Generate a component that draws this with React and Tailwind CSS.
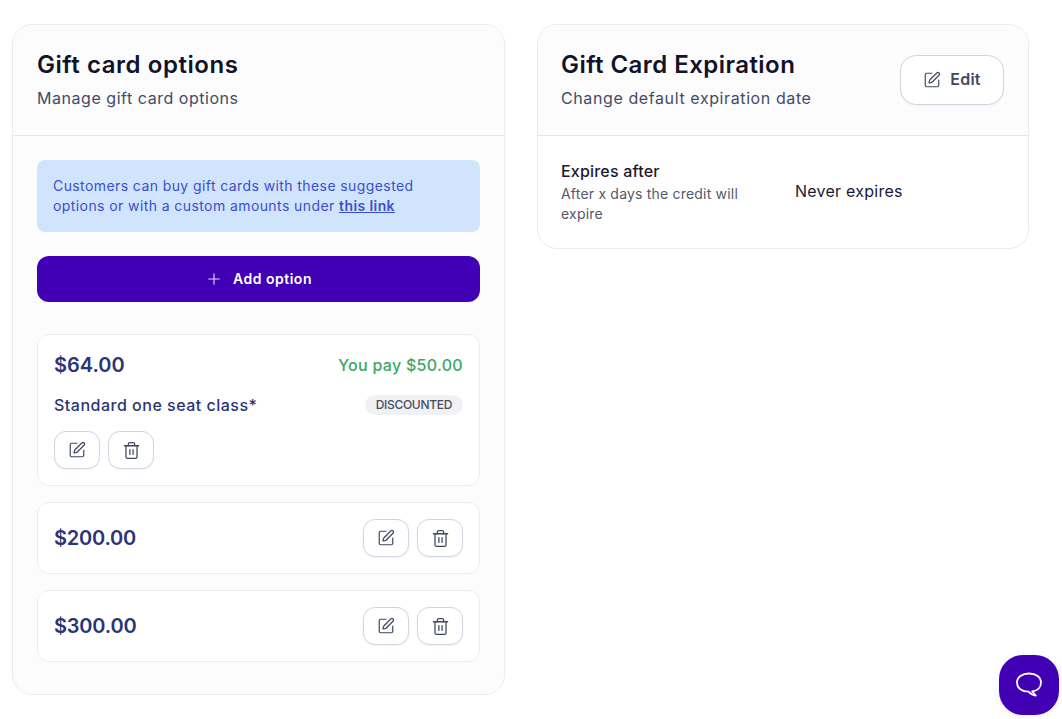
import React from "react";
import { Plus, SquarePen, Trash2 } from "lucide-react";

const IconBtn = ({ children }) => (
  <button className="flex h-[38px] w-[46px] items-center justify-center rounded-xl border border-[#d0d5e2] bg-white text-[#414860] shadow-[0_1px_2px_rgba(16,24,40,0.05)]">
    {children}
  </button>
);

const Actions = () => (
  <div className="flex gap-2">
    <IconBtn><SquarePen size={18} strokeWidth={1.6} /></IconBtn>
    <IconBtn><Trash2 size={19} strokeWidth={1.6} /></IconBtn>
  </div>
);

const PriceRow = ({ price }) => (
  <div className="flex h-[72px] items-center justify-between rounded-xl border border-[#eaecf0] bg-white px-4">
    <span className="text-xl leading-7 font-semibold tracking-[-0.2px] text-[#2a3577]">{price}</span>
    <Actions />
  </div>
);

export default function App() {
  return (
    <div className="relative flex h-[719px] items-start gap-8 overflow-hidden bg-white pt-6 pl-3 font-['Inter',sans-serif]">
      <section className="w-[493px] rounded-[20px] border border-[#eaecf0] bg-[#fcfcfd]">
        <header className="border-b border-[#e4e6ee] px-6 pt-6 pb-[25px]">
          <h1 className="text-2xl leading-8 font-semibold tracking-[0.55px] text-[#12122b]">Gift card options</h1>
          <p className="mt-[5px] text-base leading-6 tracking-[0.54px] text-[#434b66]">Manage gift card options</p>
        </header>
        <div className="flex flex-col px-6 pt-6 pb-8">
          <div className="rounded-lg bg-[#d1e4fd] py-4 pr-[20px] pl-4 text-sm leading-5 tracking-[0.41px] text-[#3a4fcf]">
            Customers can buy gift cards with these suggested options or with a custom amounts under{" "}
            <a className="font-semibold underline">this link</a>
          </div>
          <button className="mt-6 flex h-[46px] items-center justify-center gap-[10px] rounded-xl bg-[#4200b5] text-sm font-semibold tracking-[0.5px] text-white">
            <Plus size={18} strokeWidth={1.5} className="text-[#e3d6f7]" />
            Add option
          </button>
          <div className="mt-8 flex flex-col gap-4">
            <div className="h-[152px] rounded-xl border border-[#eaecf0] bg-white px-4 pt-4">
              <div className="flex items-center justify-between">
                <span className="text-xl leading-7 font-semibold text-[#2a3577]">$64.00</span>
                <span className="text-base leading-6 font-medium tracking-[0.3px] text-[#3aa865]">You pay $50.00</span>
              </div>
              <div className="mt-[14px] flex items-center justify-between">
                <span className="text-base leading-6 font-medium tracking-[0.5px] text-[#2a3577]">Standard one seat class*</span>
                <span className="rounded-full bg-[#f0f1f5] px-[11px] text-xs leading-5 font-medium tracking-[-0.3px] text-[#4a4d5c]">DISCOUNTED</span>
              </div>
              <div className="mt-[14px]"><Actions /></div>
            </div>
            <PriceRow price="$200.00" />
            <PriceRow price="$300.00" />
          </div>
        </div>
      </section>

      <section className="w-[492px] overflow-hidden rounded-[20px] border border-[#eaecf0] bg-white">
        <header className="flex items-start justify-between border-b border-[#e4e6ee] bg-[#fcfcfd] pt-6 pr-6 pb-[25px] pl-[23px]">
          <div>
            <h2 className="text-2xl leading-8 font-semibold tracking-[0.45px] text-[#12122b]">Gift Card Expiration</h2>
            <p className="mt-[5px] text-base leading-6 tracking-[0.6px] text-[#434b66]">Change default expiration date</p>
          </div>
          <button className="mt-[6px] flex h-[50px] w-[104px] items-center justify-center gap-[9px] rounded-2xl border border-[#d0d5e2] bg-white pb-[2px] text-base font-semibold tracking-[0.2px] text-[#414860] shadow-[0_1px_2px_rgba(16,24,40,0.05)]">
            <SquarePen size={18} strokeWidth={1.6} className="mt-[2px]" />
            Edit
          </button>
        </header>
        <div className="flex items-center pt-6 pr-6 pb-6 pl-[23px]">
          <div className="w-[234px] pr-[40px]">
            <div className="text-base leading-[22px] font-medium tracking-[0.2px] text-[#1a1a33]">Expires after</div>
            <p className="mt-[2px] text-sm leading-5 tracking-[0.2px] text-[#55586a]">After x days the credit will expire</p>
          </div>
          <div className="pb-[2px] text-base leading-6 tracking-[0.25px] text-[#1a1a33]">Never expires</div>
        </div>
      </section>

      <button className="absolute top-[655px] left-[999px] flex h-[60px] w-[60px] items-center justify-center rounded-[24px] bg-[#4200b5] text-white shadow-[0_1px_6px_rgba(66,0,181,0.08)]">
        <svg width="28" height="28" viewBox="0 0 28 28" fill="none" stroke="currentColor" strokeWidth="1.8" strokeLinejoin="round">
          <path d="M14 2.500c7 0 12 3.400 12 9 0 5-3.600 8.300-8.800 9l3.600 4c-2.300 0-5-1.300-7.300-3.800C7 20.700 2 17.100 2 11.500 2 5.900 7 2.500 14 2.500Z" />
        </svg>
      </button>
    </div>
  );
}
